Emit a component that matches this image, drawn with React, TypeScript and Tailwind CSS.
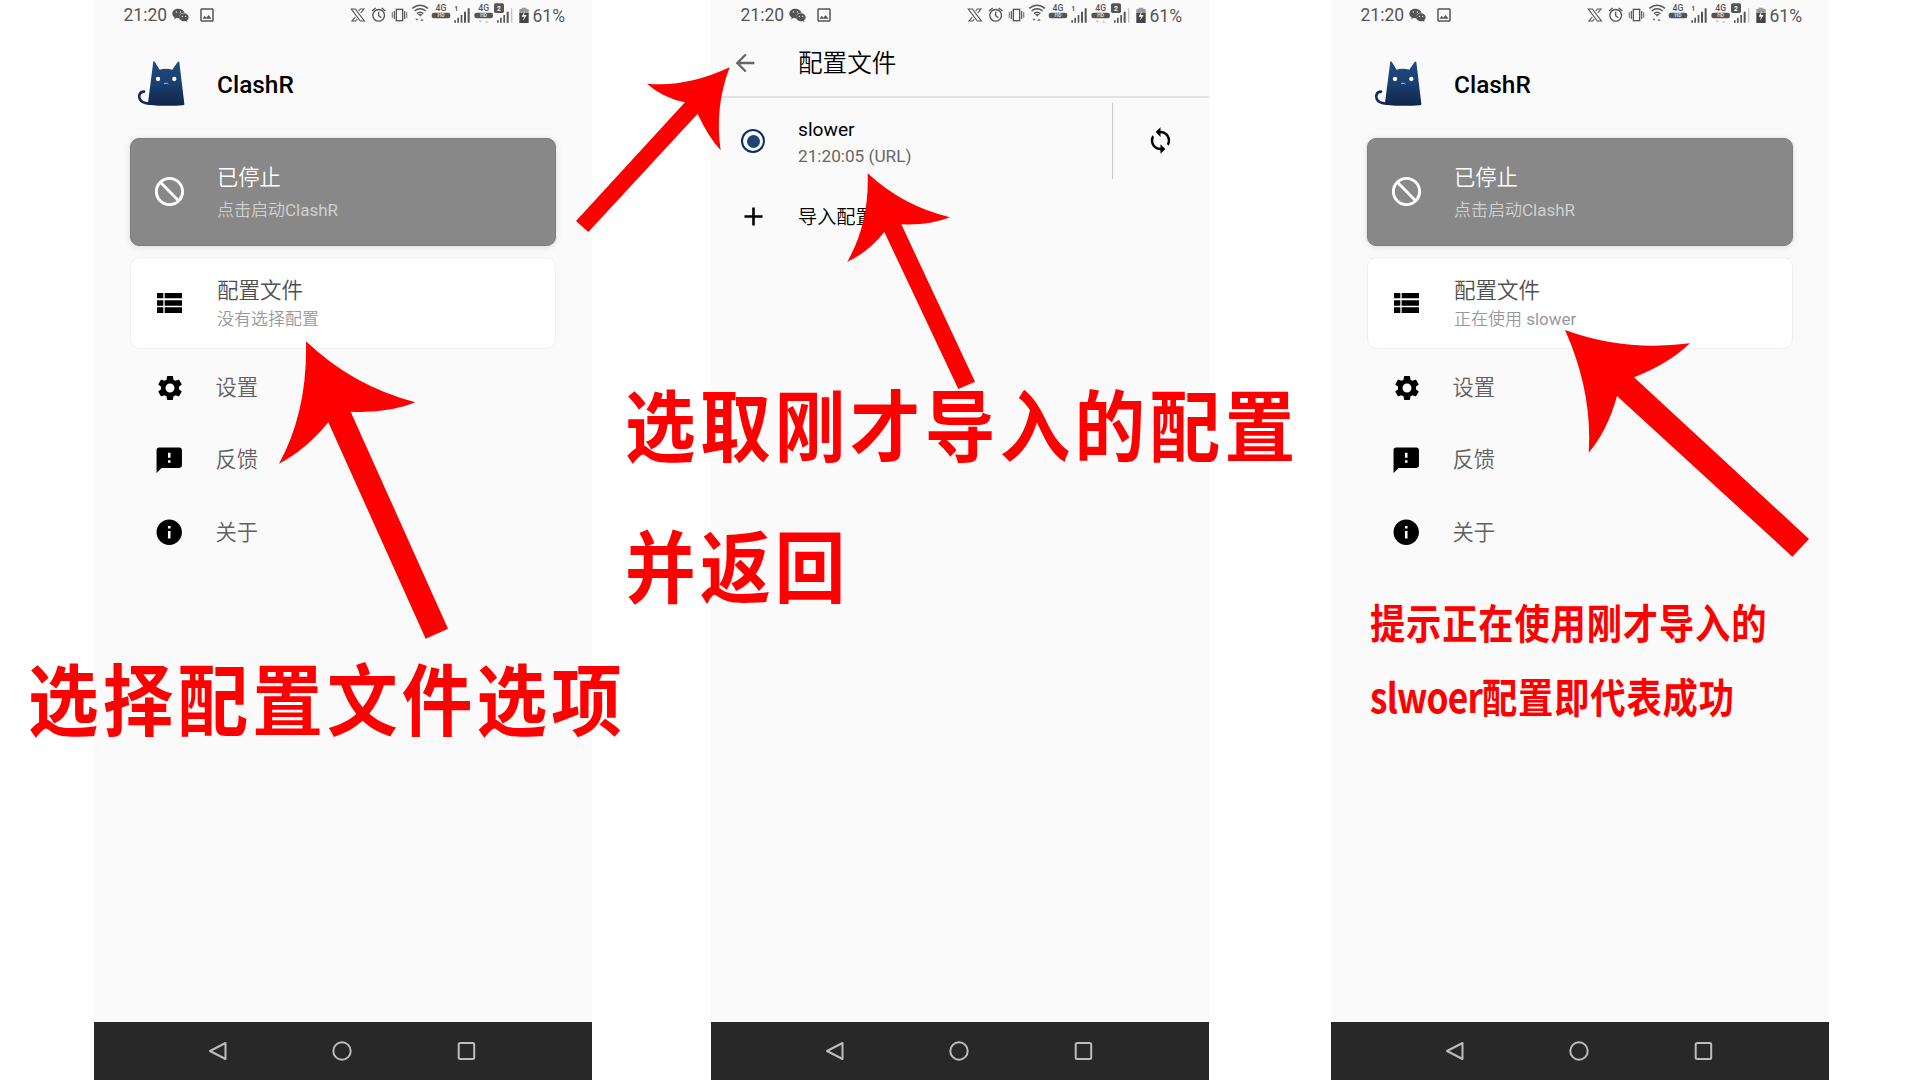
import React from "react";
import {
  MdBlock,
  MdSettings,
  MdFeedback,
  MdInfo,
  MdSync,
  MdAdd,
  MdArrowBack,
  MdOutlineImage,
} from "react-icons/md";

function CatLogo() {
  return (
    <svg className="h-[50px] w-[52px] shrink-0" viewBox="0 0 156 150">
      <defs>
        <linearGradient id="cat" x1="0" y1="0" x2="0" y2="1">
          <stop offset="0" stopColor="#1f4a80" />
          <stop offset="0.5" stopColor="#1a3f70" />
          <stop offset="1" stopColor="#10264a" />
        </linearGradient>
      </defs>
      <path
        d="M27 98 C14 98 10 110 14 119 C18 129 28 133 45 134"
        fill="none"
        stroke="#132c55"
        strokeWidth="8"
        strokeLinecap="round"
      />
      <path
        d="M55 7 Q57 5 60 10 L74 32 Q92 26 112 32 L128 9 Q131 5 133 10 L148 134 Q149 139 143 139 Q90 143 40 137 Q38 137 39 132 Z"
        fill="url(#cat)"
      />
      <circle cx="69" cy="60" r="6.5" fill="#fff" />
      <circle cx="118" cy="60" r="6.5" fill="#fff" />
      <path d="M87 75 Q90 71 93 73 Q97 71 100 75" fill="none" stroke="#cfd8e6" strokeWidth="2.5" />
    </svg>
  );
}

function WeChatIcon() {
  return (
    <svg className="h-[15px] w-[17px] shrink-0" viewBox="0 0 51 45">
      <path
        d="M19 2C9 2 1 8 1 17c0 5 3 9 7 11l-2 6 7-4c3 1 6 1 8 1C20 20 28 14 38 14 36 7 28 2 19 2Z"
        fill="#555"
      />
      <circle cx="13" cy="12" r="2" fill="#fafafa" />
      <circle cx="25" cy="12" r="2" fill="#fafafa" />
      <path
        d="M36 16c-8 0-15 5-15 12s7 12 15 12c2 0 4 0 5-1l6 3-2-5c3-2 5-5 5-9 0-7-6-12-14-12Z"
        fill="#555"
      />
      <circle cx="31" cy="25" r="2" fill="#fafafa" />
      <circle cx="41" cy="25" r="2" fill="#fafafa" />
    </svg>
  );
}

function HdBadge({ x }: { x: number }) {
  return (
    <g>
      <text
        x={x + 28}
        y="34"
        textAnchor="middle"
        fontSize="26"
        fontWeight="500"
        fill="#555"
        fontFamily="Roboto, sans-serif"
      >
        4G
      </text>
      <rect x={x} y="38" width="56" height="17" rx="7" fill="#555" />
      <text
        x={x + 28}
        y="52"
        textAnchor="middle"
        fontSize="15"
        fontWeight="700"
        fill="#ddd"
        fontFamily="Roboto, sans-serif"
      >
        HD
      </text>
    </g>
  );
}

function StatusIcons() {
  return (
    <svg className="h-[30px] w-[164px] shrink-0" viewBox="30 0 492 90">
      <g fill="none" stroke="#555" strokeWidth="4">
        <path d="M34 27h12l27 36H61Z" strokeWidth="3.5" />
        <path d="M62 39l10-12H61l-5 6 M46 51l-10 12h11l5-6" strokeWidth="3.5" />
        <circle cx="116" cy="46" r="17.5" />
        <path d="M116 35v12l8 6" />
        <path d="M96 33l11-9 M136 33l-11-9" strokeWidth="4" />
        <rect x="169" y="28" width="19" height="34" strokeWidth="4" />
        <path d="M163 33v24 M194 33v24" strokeWidth="3.5" />
        <path d="M157 37v16 M200 37v16" stroke="#888" />
        <path d="M217 25Q240 6 264 25 M224 33Q240 20 257 33 M231 41Q240 33 250 41" strokeWidth="4.5" />
      </g>
      <path d="M233 42h15l-7 8Z M226 56h9l-4 6Z M241 62h10l-5-6Z" fill="#666" />
      <HdBadge x={275} />
      <text x="343" y="32" fontSize="21" fontWeight="700" fill="#555" fontFamily="Roboto, sans-serif">
        1
      </text>
      <g fill="#555">
        <path d="M343 61h5v7h-5Z M352 53h5v15h-5Z M362 45h5v23h-5Z M372 35h6v33h-6Z M383 25h6v43h-6Z" />
        <path d="M471 61h5v7h-5Z M480 53h5v15h-5Z M490 45h5v23h-5Z M500 35h6v33h-6Z" />
        <rect x="462" y="10" width="30" height="29" rx="5" />
      </g>
      <path d="M513 25h4v43h-4Z M416 61h10l-5 7Z M435 68h10l-5-7Z" fill="#c4c4c4" />
      <HdBadge x={403} />
      <text
        x="477"
        y="32"
        textAnchor="middle"
        fontSize="20"
        fontWeight="700"
        fill="#fff"
        fontFamily="Roboto, sans-serif"
      >
        2
      </text>
    </svg>
  );
}

function BatteryIcon() {
  return (
    <svg className="ml-[5px] h-[17px] w-[10px] shrink-0" viewBox="0 0 30 51">
      <path d="M8 2h14v4h7v16H1V6h7Z" fill="#999" />
      <path d="M1 18h28v30H1Z" fill="#444" />
      <path d="M17 12L8 29h7l-3 12 11-17h-8Z" fill="#fafafa" />
    </svg>
  );
}

function StatusBar() {
  return (
    <div className="flex h-[30px] shrink-0 items-center pl-[29.5px] text-[17.5px] text-[#555]">
      <span className="w-[48px] leading-[30px]">21:20</span>
      <div className="flex w-[179px] items-center gap-[9px]">
        <WeChatIcon />
        <MdOutlineImage className="size-[18px]" />
      </div>
      <div className="-ml-[1px] flex items-center">
        <StatusIcons />
        <BatteryIcon />
        <span className="ml-[4px] pt-[1px] leading-[30px]">61%</span>
      </div>
    </div>
  );
}

function NavBar() {
  return (
    <div className="mt-auto grid h-[58px] shrink-0 grid-cols-3 place-items-center bg-[#282828] pr-[63px] pl-[62px]">
      <svg className="size-[22px]" viewBox="0 0 22 22" fill="none" stroke="#bdbdbd" strokeWidth="2">
        <path d="M18.5 3v16L3 11Z" strokeLinejoin="round" />
      </svg>
      <svg className="size-[22px]" viewBox="0 0 22 22" fill="none" stroke="#bdbdbd" strokeWidth="2">
        <circle cx="11" cy="11" r="8.7" />
      </svg>
      <svg className="size-[22px]" viewBox="0 0 22 22" fill="none" stroke="#bdbdbd" strokeWidth="2">
        <rect x="2.7" y="3" width="15.5" height="16" rx="1.5" />
      </svg>
    </div>
  );
}

function Phone({ className, children }: { className: string; children: React.ReactNode }) {
  return (
    <section className={"flex h-[1080px] w-[498px] shrink-0 flex-col bg-[#fafafa] " + className}>
      <StatusBar />
      {children}
      <NavBar />
    </section>
  );
}

function MenuRow({ icon, label }: { icon: React.ReactNode; label: string }) {
  return (
    <div className="flex h-[72.5px] items-center">
      <div className="flex w-[79px] justify-center">{icon}</div>
      <span className="ml-[6.5px] text-[21.3px] leading-[30px] font-[350] text-[#606060]">{label}</span>
    </div>
  );
}

function HomeScreen({ className, profile }: { className: string; profile: React.ReactNode }) {
  return (
    <Phone className={className}>
      <header className="flex h-[108px] items-center pl-[41px]">
        <CatLogo />
        <h1 className="ml-[30px] pt-[1px] text-[24.4px] leading-[30px] font-medium text-black">ClashR</h1>
      </header>
      <div className="flex flex-col px-[36px]">
        <div className="flex h-[107.5px] items-center rounded-[9px] border border-[#7c7c7c] bg-[#888] shadow-[0_1px_6px_rgba(0,0,0,0.12)]">
          <div className="flex w-[76px] justify-center pb-[1px]">
            <MdBlock className="size-[35px] -scale-x-100 text-white" />
          </div>
          <div className="ml-[10px] flex flex-col pt-[4px]">
            <span className="text-[21.3px] leading-[32px] font-[350] text-white">已停止</span>
            <span className="text-[17px] leading-[32px] font-[350] text-[#d0d0d0]">
              点击启动<span className="font-normal">ClashR</span>
            </span>
          </div>
        </div>
        <div className="mt-[11.5px] flex h-[92px] items-center rounded-[10px] border border-[#f0f0f0] bg-white">
          <div className="flex w-[77px] justify-center">
            <svg className="h-[20px] w-[25px]" viewBox="0 0 75 60">
              <path
                d="M0 0h19v16H0Z M23 0h52v16H23Z M0 22h19v16H0Z M23 22h52v16H23Z M0 43h19v17H0Z M23 43h52v17H23Z"
                fill="#000"
              />
            </svg>
          </div>
          <div className="ml-[9px] flex flex-col pt-[4px]">
            <span className="text-[21.5px] leading-[28px] font-[350] text-[#505050]">配置文件</span>
            <span className="text-[17px] leading-[28px] font-[350] text-[#999]">{profile}</span>
          </div>
        </div>
        <nav className="mt-[2.4px] flex flex-col">
          <MenuRow icon={<MdSettings className="size-[30px]" />} label="设置" />
          <MenuRow icon={<MdFeedback className="size-[30.5px]" />} label="反馈" />
          <MenuRow icon={<MdInfo className="size-[30.5px]" />} label="关于" />
        </nav>
      </div>
    </Phone>
  );
}

function ProfilesScreen({ className }: { className: string }) {
  return (
    <Phone className={className}>
      <header className="flex h-[68px] items-center border-b-2 border-[#e2e2e2] pl-[20px]">
        <MdArrowBack className="size-[28px] text-[#666]" />
        <h1 className="ml-[39px] pt-[2px] text-[24.6px] leading-[32px] font-[350] text-black">配置文件</h1>
      </header>
      <div className="flex h-[86px] items-center pl-[30px]">
        <div className="flex size-[24px] items-center justify-center rounded-full border-2 border-[#0b2a66]">
          <div className="size-[13px] rounded-full bg-[#1d4478]" />
        </div>
        <div className="ml-[33px] flex w-[314px] flex-col pt-[3px]">
          <span className="text-[19.2px] leading-[27px] text-black">slower</span>
          <span className="text-[17.2px] leading-[27px] text-[#666]">21:20:05 (URL)</span>
        </div>
        <div className="h-[76px] w-px bg-[#c8c8c8]" />
        <MdSync className="mb-[1px] ml-[33px] size-[29px]" />
      </div>
      <div className="flex h-[64px] items-center pl-[26.5px]">
        <MdAdd className="size-[31px]" />
        <span className="ml-[29.5px] pt-[3px] text-[19.2px] leading-[28px] font-[350] text-black">导入配置</span>
      </div>
    </Phone>
  );
}

export default function App() {
  return (
    <main className="relative flex h-[1080px] w-[1920px] overflow-hidden bg-white font-['Roboto','Noto_Sans_CJK_SC',sans-serif]">
      <HomeScreen className="ml-[94px]" profile="没有选择配置" />
      <ProfilesScreen className="ml-[119px]" />
      <HomeScreen
        className="ml-[122px]"
        profile={
          <>
            正在使用 <span className="font-normal">slower</span>
          </>
        }
      />

      <svg className="absolute top-[340px] left-[130px] h-[320px] w-[340px]" viewBox="0 0 1020 960">
        <path
          d="M528 4Q668 138 856 187Q780 220 662 215L954 866L887 896L595 247Q526 331 447 371Q533 215 528 4Z"
          fill="#f00"
        />
      </svg>
      <svg className="absolute top-[50px] left-[570px] size-[200px]" viewBox="0 0 600 600">
        <path
          d="M479 52Q348 113 231 101Q277 143 345 157L18 513L55 546L383 191Q412 256 452 301Q433 172 479 52Z"
          fill="#f00"
        />
      </svg>
      <svg className="absolute top-[150px] left-[820px] h-[250px] w-[180px]" viewBox="0 0 540 750">
        <path
          d="M143 70Q248 168 390 202Q332 226 244 223L465 695L415 717L193 246Q142 309 82 335Q148 220 143 70Z"
          fill="#f00"
        />
      </svg>
      <svg className="absolute top-[240px] left-[1320px] h-[340px] w-[520px]" viewBox="0 0 1560 1020">
        <path
          d="M735 270Q915 336 1110 310Q1045 372 942 412L1467 897L1417 950L891 468Q862 573 806 638Q818 456 735 270Z"
          fill="#f00"
        />
      </svg>

      <p className="absolute top-[644px] left-[28px] origin-left scale-x-[0.905] text-[78px] leading-[120px] font-bold tracking-[4.6px] whitespace-nowrap text-[#f00]">
        选择配置文件选项
      </p>
      <p className="absolute top-[359px] left-[625px] origin-left scale-x-[0.905] text-[78px] leading-[141px] font-bold tracking-[4.8px] whitespace-nowrap text-[#f00]">
        选取刚才导入的配置
        <br />
        并返回
      </p>
      <p className="absolute top-[584px] left-[1370px] origin-left scale-x-[0.86] font-['Noto_Sans_CJK_SC',sans-serif] text-[41px] leading-[74px] font-bold tracking-[1px] whitespace-nowrap text-[#f00]">
        提示正在使用刚才导入的
        <br />
        <span className="tracking-[-0.9px]">slwoer</span>配置即代表成功
      </p>
    </main>
  );
}
